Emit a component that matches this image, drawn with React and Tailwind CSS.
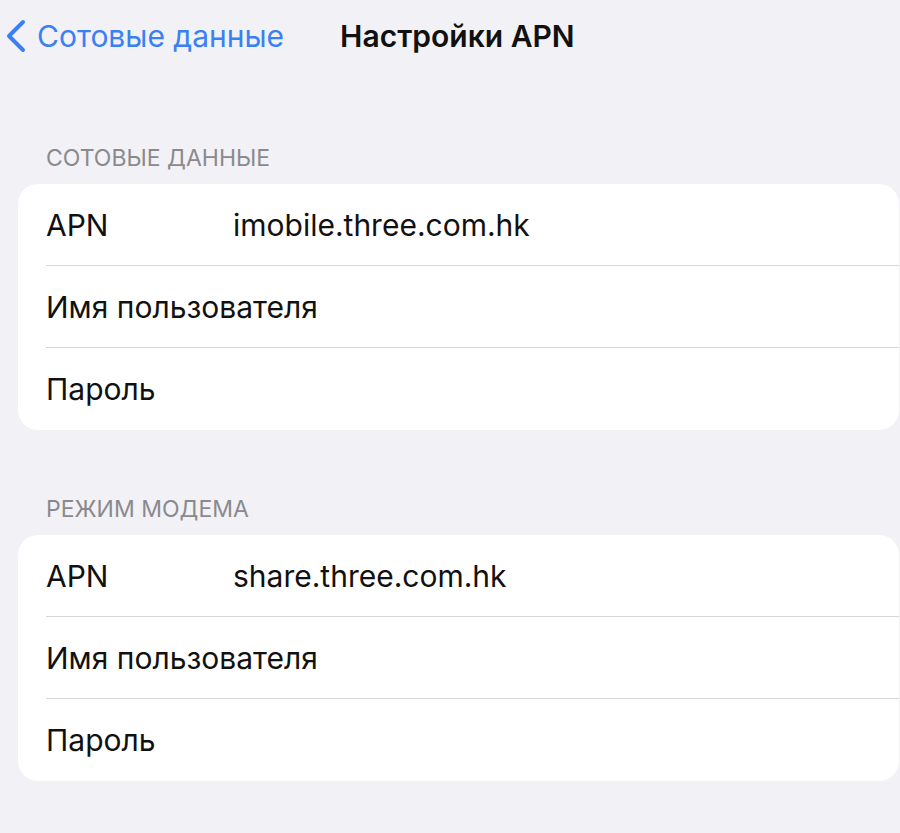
const sections = [
  {
    title: "СОТОВЫЕ ДАННЫЕ",
    rows: [
      { label: "APN", value: "imobile.three.com.hk" },
      { label: "Имя пользователя", value: "" },
      { label: "Пароль", value: "" },
    ],
  },
  {
    title: "РЕЖИМ МОДЕМА",
    rows: [
      { label: "APN", value: "share.three.com.hk" },
      { label: "Имя пользователя", value: "" },
      { label: "Пароль", value: "" },
    ],
  },
];

const Row = ({ label, value, last }) => (
  <div className="relative flex h-[82px] items-center whitespace-nowrap pl-[28px]">
    <span className="min-w-[187px]">{label}</span>
    <span>{value}</span>
    {!last && (
      <div className="absolute bottom-0 left-[28px] right-0 h-px bg-[#d6d6da]" />
    )}
  </div>
);

const App = () => {
  return (
    <div
      className="min-h-[833px] w-[900px] bg-[#f2f1f6] text-[#111]"
      style={{ fontFamily: "Inter, 'Noto Sans', sans-serif" }}
    >
      {/* nav bar */}
      <div className="flex h-[72px] items-center whitespace-nowrap">
        <div className="flex items-center pl-[5px] text-[#3a80f5]">
          <svg width="22" height="34" viewBox="0 0 22 34" fill="none">
            <path
              d="M18 3 L4 17 L18 31"
              stroke="currentColor"
              strokeWidth="4"
              strokeLinecap="round"
              strokeLinejoin="round"
            />
          </svg>
          <span className="ml-[10px] text-[30px] leading-none">Сотовые данные</span>
        </div>
        <span className="ml-[56px] text-[30px] font-semibold leading-none">
          Настройки APN
        </span>
      </div>

      <div className="pt-[74px]">
        {sections.map((s, i) => (
          <div key={i} className={i > 0 ? "mt-[67px]" : ""}>
            <div className="pl-[46px] pb-[14px] text-[23px] leading-[24px] text-[#8a8a8e]">
              {s.title}
            </div>
            <div className="ml-[18px] mr-[1px] rounded-[20px] bg-white text-[30px]">
              {s.rows.map((r, j) => (
                <Row key={j} {...r} last={j === s.rows.length - 1} />
              ))}
            </div>
          </div>
        ))}
      </div>
    </div>
  );
};

export default App;
